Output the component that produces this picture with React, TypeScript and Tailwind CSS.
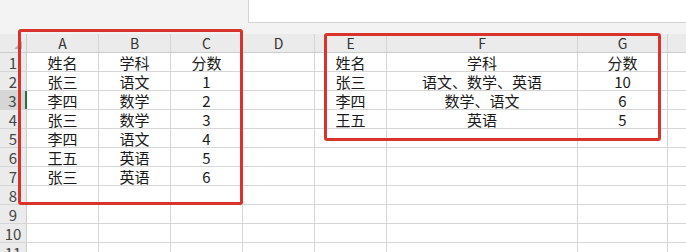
import React from "react";

const COLS = [
  { key: "A", w: 72 },
  { key: "B", w: 72 },
  { key: "C", w: 72 },
  { key: "D", w: 72 },
  { key: "E", w: 72 },
  { key: "F", w: 191 },
  { key: "G", w: 90 },
  { key: "H", w: 72 },
];

const cells: Record<string, string> = {
  A1: "姓名", B1: "学科", C1: "分数",
  A2: "张三", B2: "语文", C2: "1",
  A3: "李四", B3: "数学", C3: "2",
  A4: "张三", B4: "数学", C4: "3",
  A5: "李四", B5: "语文", C5: "4",
  A6: "王五", B6: "英语", C6: "5",
  A7: "张三", B7: "英语", C7: "6",
  E1: "姓名", F1: "学科", G1: "分数",
  E2: "张三", F2: "语文、数学、英语", G2: "10",
  E3: "李四", F3: "数学、语文", G3: "6",
  E4: "王五", F4: "英语", G4: "5",
};

const ROWS = Array.from({ length: 11 }, (_, i) => i + 1);
const ACTIVE_ROW = 3;

const font = { fontFamily: '"Noto Sans CJK SC", "Noto Sans", sans-serif' };

const App: React.FC = () => {
  return (
    <div className="relative w-[686px] h-[252px] overflow-hidden bg-[#f3f3f3]" style={font}>
      {/* formula bar */}
      <div className="flex h-[34px]">
        <div className="w-[248px] shrink-0" />
        <div className="flex-1 h-[23px] bg-white border-l border-b border-[#d4d4d4]" />
      </div>

      {/* column headers */}
      <div className="flex h-[19px] bg-[#ebebeb] border-b border-[#cdcdcd]">
        <div className="relative w-[27px] shrink-0 border-r border-[#cdcdcd]">
          <svg className="absolute right-[4px] bottom-[3px]" width="8" height="8" viewBox="0 0 8 8">
            <polygon points="8,0 8,8 0,8" fill="#b5b5b5" />
          </svg>
        </div>
        {COLS.map((c) => (
          <div
            key={c.key}
            className="shrink-0 flex items-center justify-center border-r border-[#d4d4d4] text-[14px] text-[#333] leading-none"
            style={{ width: c.w }}
          >
            {c.key}
          </div>
        ))}
      </div>

      {/* grid body */}
      <div className="bg-white">
        {ROWS.map((r) => (
          <div key={r} className="flex h-[19px] border-b border-[#d6d6d6]">
            <div
              className={
                r === ACTIVE_ROW
                  ? "w-[27px] shrink-0 flex items-center justify-center bg-[#d6d6d6] border-r-2 border-[#217346] text-[15px] text-[#444] leading-none"
                  : "w-[27px] shrink-0 flex items-center justify-center bg-[#ebebeb] border-r border-[#cdcdcd] text-[15px] text-[#444] leading-none"
              }
            >
              {r}
            </div>
            {COLS.map((c) => (
              <div
                key={c.key}
                className="shrink-0 flex items-center justify-center border-r border-[#d6d6d6] text-[15px] text-[#1a1a1a] leading-none whitespace-nowrap"
                style={{ width: c.w }}
              >
                {cells[`${c.key}${r}`] ?? ""}
              </div>
            ))}
          </div>
        ))}
      </div>

      {/* highlight frames */}
      <div className="absolute left-[18px] top-[29px] w-[225px] h-[176px] border-[3px] border-[#d9342b] rounded-[3px]" />
      <div className="absolute left-[324px] top-[33px] w-[337px] h-[108px] border-[3px] border-[#d9342b] rounded-[3px]" />
    </div>
  );
};

export default App;
